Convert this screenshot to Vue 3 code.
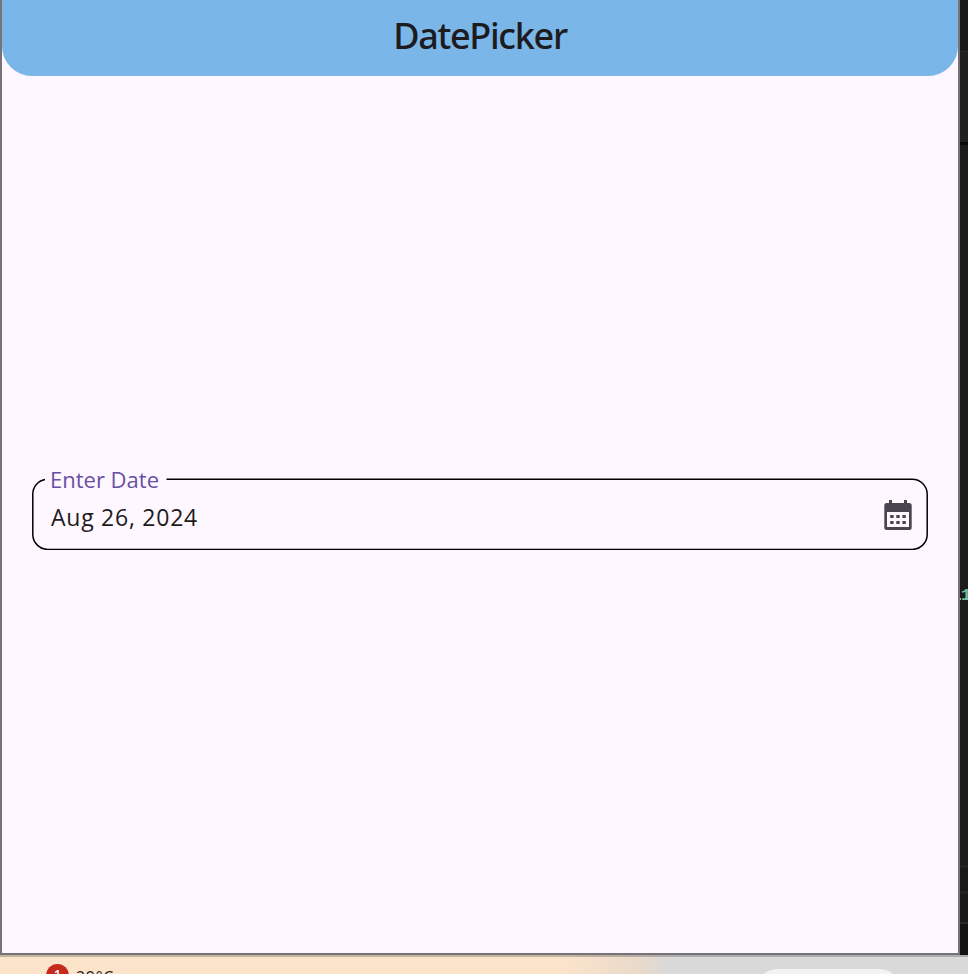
<script setup>
const date = 'Aug 26, 2024'
const dots = [0, 1].flatMap((r) => [0, 1, 2].map((c) => ({ x: 6.2 + c * 6.1, y: 15 + r * 6 })))
</script>

<template>
  <div class="desktop">
    <div class="upper">
      <main class="window">
        <header class="bar"><h1>DatePicker</h1></header>
        <section class="body">
          <div class="field">
            <svg class="outline" width="896" height="72" viewBox="0 0 896 72">
              <path d="M134.5 1.2H880A15 15 0 0 1 895.2 16V56.5A15 15 0 0 1 880 71.4H16A15 15 0 0 1 .8 56.5V16A15 15 0 0 1 13 1.4" />
            </svg>
            <label class="label">Enter Date</label>
            <span class="value">{{ date }}</span>
            <svg class="calendar" width="28" height="31" viewBox="0 0 28 31">
              <path fill-rule="evenodd" d="M5 0h3v3h12V0h3v3h2.2a2.5 2.5 0 0 1 2.5 2.5v22a2.5 2.5 0 0 1-2.5 2.5H2.8a2.5 2.5 0 0 1-2.5-2.5v-22A2.5 2.5 0 0 1 2.8 3H5zM3 12v15h22V12z" />
              <rect v-for="d in dots" :key="`${d.x}-${d.y}`" :x="d.x" :y="d.y" width="3.4" height="3" />
            </svg>
          </div>
        </section>
      </main>
      <aside class="editor">
        <div class="pane top"></div>
        <div class="pane tabs"></div>
        <div class="pane code"><span class="num"><i></i>1</span></div>
        <div class="pane row1"></div>
        <div class="pane row2"></div>
        <div class="pane row3"></div>
        <div class="pane last"></div>
      </aside>
    </div>
    <footer class="taskbar">
      <span class="badge">1</span>
      <span class="temp">29°C</span>
      <span class="search"></span>
    </footer>
  </div>
</template>

<style>
body { margin: 0; overflow: hidden; }
</style>

<style scoped>
.desktop { width: 968px; height: 974px; overflow: hidden; display: flex; flex-direction: column; font-family: "Open Sans", "Noto Sans", sans-serif; }
.upper { display: flex; height: 955px; flex: none; }
.window { box-sizing: border-box; width: 960px; height: 955px; border: 2px solid #757278; border-top: 0; background: #fef7ff; display: flex; flex-direction: column; }
.bar { height: 76px; flex: none; background: #7ab6e8; border-radius: 0 0 30px 30px; display: flex; justify-content: center; align-items: center; }
h1 { margin: 0; font-family: "Noto Sans", sans-serif; font-size: 36px; line-height: 50px; font-weight: 500; color: #1d1b20; letter-spacing: -1.3px; white-space: nowrap; transform: translateY(-2px); }
.body { flex: 1; padding: 402px 30px 0; }
.field { position: relative; width: 896px; height: 72px; box-sizing: border-box; padding: 22px 16px 0 19px; display: flex; justify-content: space-between; align-items: flex-start; }
.outline { position: absolute; inset: 0; }
.outline path { fill: none; stroke: #000; stroke-width: 1.5; }
.label { position: absolute; left: 18px; top: -14px; font-size: 22px; line-height: 30px; color: #6750a4; white-space: nowrap; }
.value { font-size: 23px; line-height: 34px; color: #1d1b20; letter-spacing: 0.75px; white-space: nowrap; }
.calendar { fill: #49454f; }
.editor { width: 8px; display: flex; flex-direction: column; background: #181818; overflow: hidden; }
.pane { flex: none; box-sizing: border-box; }
.top { height: 52px; background: #181818; border-bottom: 1px solid #2b2b2b; }
.tabs { height: 93px; background: #1f1f1f; border-bottom: 3px solid #080808; }
.code { height: 720px; background: #1b1b1b; padding-top: 441px; }
.num { display: flex; align-items: center; font: bold 17px/20px "Liberation Mono", monospace; color: #75bba5; }
.num i { width: 1px; height: 2px; flex: none; margin-top: 5px; background: #d0ae62; }
.row1 { height: 26px; background: #181818; border-top: 3px solid #222; }
.row2 { height: 31px; background: #181818; border-top: 3px solid #222; }
.row3 { height: 2px; background: #282828; }
.last { flex: 1; background: #131313; }
.taskbar { box-sizing: border-box; height: 19px; flex: none; display: flex; align-items: flex-start; overflow: hidden; border-top: 2px solid rgba(90, 90, 90, 0.35); padding: 7px 0 0 46px; background: linear-gradient(90deg, #fce4cb 0, #fce4cb 560px, #eadac9 635px, #d9d9d9 670px, #d9d9d9 100%); }
.badge { width: 23px; height: 23px; flex: none; border-radius: 50%; background: #c42b1c; color: #fff; font-size: 13px; font-weight: 600; line-height: 21px; text-align: center; }
.temp { margin-left: 7px; font-size: 16px; line-height: 27px; letter-spacing: 0.7px; color: #222; }
.search { margin: 5px 68px 0 auto; width: 143px; height: 40px; border-radius: 20px; background: #f3f3f3; flex: none; }
</style>
